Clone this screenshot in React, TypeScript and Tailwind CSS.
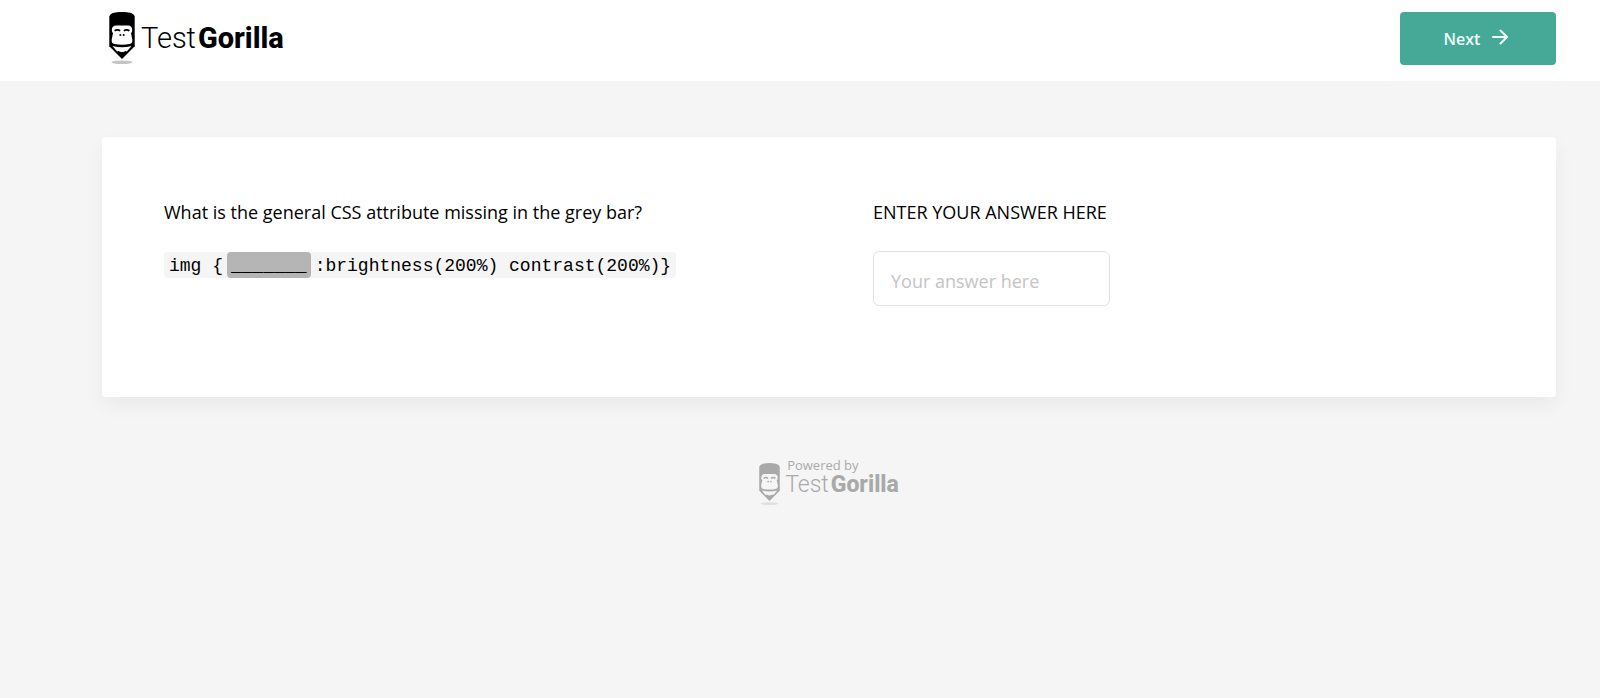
import React from "react";

function Mascot({ className, shade, face }: { className: string; shade: string; face: string }) {
  return (
    <svg viewBox="0 0 26 53" className={className} fill="currentColor" aria-hidden="true">
      <path d="M0.3 4.5 Q1 1.6 5 0.7 Q13 -0.8 21 0.7 Q25 1.6 25.7 4.5 V34.2 L13 47 L0.3 34.2 Z" />
      <path
        fill={face}
        d="M7 13.6 H19 Q23 13.8 23.2 18 Q23.2 19.8 22 21.3 L23.3 27.5 Q23.8 31.6 20.5 32 Q13 33.4 5.5 32 Q2.2 31.6 2.7 27.5 L4 21.3 Q2.8 19.8 2.8 18 Q3 13.8 7 13.6 Z"
      />
      <path fill={face} d="M3.4 34 Q13 36.4 22.6 34 L17.8 39.4 Q16.6 38.6 15.4 39.5 Q13 40.6 10.6 39.5 Q9.4 38.6 8.2 39.4 Z" />
      <path fill="none" stroke="currentColor" strokeWidth="1.8" d="M5.6 18.8 Q8.4 17 11.2 18.8 M14.8 18.8 Q17.6 17 20.4 18.8" />
      <circle cx="11.3" cy="23" r="1" />
      <circle cx="14.7" cy="23" r="1" />
      <ellipse cx="13" cy="50.2" rx="10.5" ry="1.8" fill={shade} />
    </svg>
  );
}

export default function App() {
  return (
    <div className="min-h-screen bg-[#f5f5f5] font-['Open_Sans','Noto_Sans',sans-serif] text-black">
      <header className="flex items-start justify-between bg-white pt-3 pr-11 pb-4 pl-[109px]">
        <a href="#" aria-label="TestGorilla" className="flex items-start gap-1.5">
          <Mascot className="h-[53px] w-[26px]" shade="#c4c4c4" face="#ffffff" />
          <span className="mt-2 font-['Roboto',sans-serif] text-[29px] leading-9 font-light">
            Test<strong className="ml-0.5 font-extrabold">Gorilla</strong>
          </span>
        </a>
        <button
          type="button"
          className="flex h-[53px] w-[156px] items-center justify-center gap-3 rounded bg-[#46a997] pr-1 text-base font-semibold text-[#effffb]"
        >
          Next
          <svg viewBox="0 0 16 16" className="mb-1 size-4" fill="none" stroke="currentColor" strokeWidth="2" strokeLinecap="round" strokeLinejoin="round" aria-hidden="true">
            <path d="M1 8 H15 M8.5 1.5 L15 8 L8.5 14.5" />
          </svg>
        </button>
      </header>

      <main className="pt-14 pr-11 pl-[102px]">
        <section className="grid grid-cols-2 gap-[88px] rounded bg-white px-[62px] pt-[61px] pb-[91px] shadow-[0_8px_20px_rgba(0,0,0,0.05)]">
          <div>
            <p className="text-lg leading-7">What is the general CSS attribute missing in the grey bar?</p>
            <code className="mt-[26px] inline-flex h-[26px] rounded-sm bg-[#f5f5f5] px-[5px] font-['Liberation_Mono',monospace] text-lg leading-7 whitespace-pre">
              {"img {"}
              <span className="mx-1 h-[26px] rounded bg-[#b5b5b5] px-1">_______</span>
              {":brightness(200%) contrast(200%)}"}
            </code>
          </div>
          <div>
            <label htmlFor="answer" className="block text-lg leading-7">
              ENTER YOUR ANSWER HERE
            </label>
            <input
              id="answer"
              type="text"
              placeholder="Your answer here"
              className="mt-[25px] block h-[55px] w-[237px] rounded-md border border-[#e2e2e2] bg-white px-[17px] pt-1 text-lg outline-none placeholder:text-[#c4c4c4]"
            />
          </div>
        </section>

        <footer className="mt-[60px] flex justify-center text-[#a9a9a9]">
          <a href="#" aria-label="Powered by TestGorilla" className="flex items-start gap-[5px]">
            <Mascot className="mt-1.5 h-[43px] w-[21px]" shade="#e0e0e0" face="#f5f5f5" />
            <span className="flex flex-col">
              <span className="pl-0.5 text-[13px] leading-4">Powered by</span>
              <span className="font-['Roboto',sans-serif] text-[23px] leading-6 font-light">
                Test<strong className="ml-0.5 font-extrabold">Gorilla</strong>
              </span>
            </span>
          </a>
        </footer>
      </main>
    </div>
  );
}
